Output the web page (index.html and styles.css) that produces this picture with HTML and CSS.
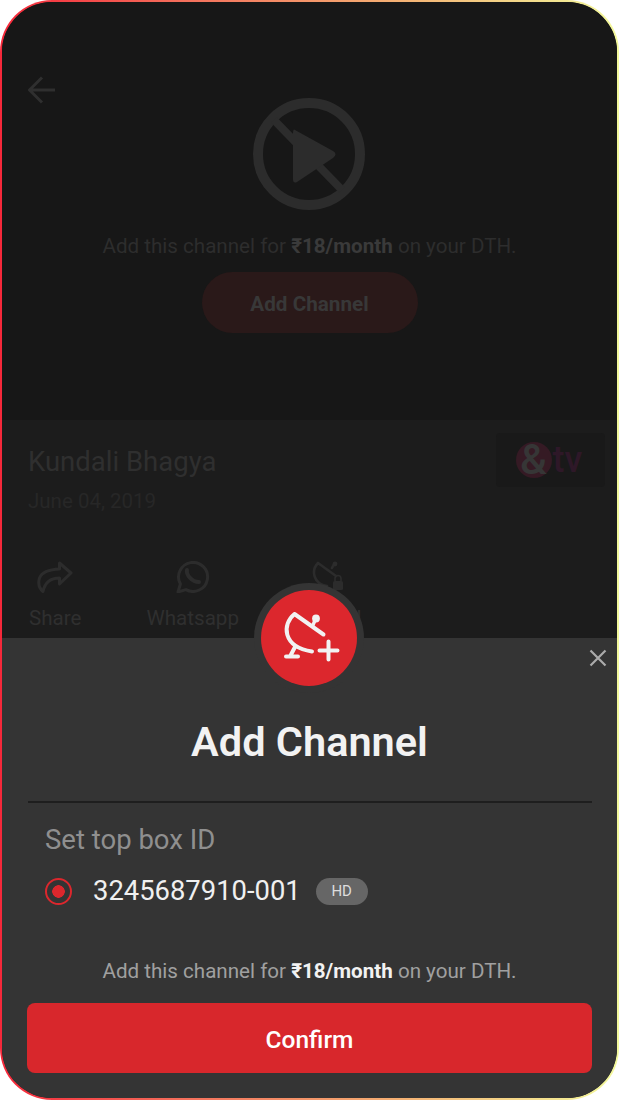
FILE: index.html
```html
<!DOCTYPE html>
<html>
  <head>
    <title>Add Channel</title>
    <link rel="stylesheet" href="styles.css">
  </head>
  <body>
    <div class="frame">
      <div class="screen">
        <div class="hero">
          <div class="hero-top">
            <svg class="back" width="28" height="28" viewBox="0 0 28 28">
              <path d="M27 14H2M14 1.5L1.5 14L14 26.5" fill="none" stroke="#2f2f2f" stroke-width="3"/>
            </svg>
            <svg class="blocked" width="112" height="112" viewBox="0 0 112 112">
              <circle cx="56" cy="56" r="51" fill="none" stroke="#2c2c2c" stroke-width="10"/>
              <path d="M21 22L89 92" stroke="#2c2c2c" stroke-width="8"/>
              <path d="M42 32L80 53Q85 56 80 60L44 84Q40 86 40 81V36Q40 30 42 32Z" fill="#2c2c2c"/>
            </svg>
          </div>
          <p class="note note-dim">Add this channel for <b>₹18/month</b> on your DTH.</p>
          <div class="add-btn">Add Channel</div>
        </div>

        <div class="details">
          <div class="show-row">
            <div>
              <div class="show-title">Kundali Bhagya</div>
              <div class="show-date">June 04, 2019</div>
            </div>
            <div class="logo">
              <span class="logo-amp">&amp;</span><span class="logo-tv">tv</span>
            </div>
          </div>
          <div class="actions">
            <div class="action action-share">
              <svg width="36" height="32" viewBox="0 0 36 32">
                <path d="M22.5 2L34 12L22.5 23V17C14 17 8 21 6 30.5C2 27 1 22 2.5 17C5 11 11 8.5 22.5 8Z" fill="none" stroke="#2c2c2c" stroke-width="3" stroke-linejoin="round"/>
              </svg>
              <span>Share</span>
            </div>
            <div class="action action-whatsapp">
              <svg width="36" height="32" viewBox="0 0 36 32">
                <path d="M3 31L5.4 23A14.5 14.5 0 1 1 11 28.6Z" fill="none" stroke="#2c2c2c" stroke-width="3" stroke-linejoin="round"/>
                <path d="M12 9C11 14 17 21 24 21" fill="none" stroke="#2c2c2c" stroke-width="4" stroke-linecap="round"/>
              </svg>
              <span>Whatsapp</span>
            </div>
            <div class="action action-channel">
              <svg width="36" height="32" viewBox="0 0 36 32">
                <path d="M6 2L24 15M20 7L22 3M6 2C-1 9 1 23 15 25" fill="none" stroke="#2c2c2c" stroke-width="2.6" stroke-linecap="round"/>
                <circle cx="23" cy="3" r="2.4" fill="#2c2c2c"/>
                <rect x="21" y="20" width="10" height="9" rx="1.5" fill="#2c2c2c"/>
                <path d="M23 20V17.5A3 3 0 0 1 29 17.5V20" fill="none" stroke="#2c2c2c" stroke-width="1.6"/>
              </svg>
              <span>Channel</span>
            </div>
          </div>
        </div>

        <div class="sheet">
          <div class="badge">
            <svg width="96" height="96" viewBox="0 0 96 96">
              <path d="M33.5 24L62.5 44.5M33.5 24C21 34 21 57 51 61.5M34 57L29 66.5M25 66.5H37" fill="none" stroke="#f2f2f2" stroke-width="4" stroke-linecap="round" stroke-linejoin="round"/>
              <path d="M52 35L55 28" stroke="#f2f2f2" stroke-width="3.4" stroke-linecap="round"/>
              <circle cx="55" cy="28.5" r="3.9" fill="#f2f2f2"/>
              <path d="M58.5 60.5H76.5M67.5 51.5V69.5" stroke="#f2f2f2" stroke-width="4" stroke-linecap="round"/>
            </svg>
          </div>
          <svg class="close" width="18" height="18" viewBox="0 0 18 18">
            <path d="M1.5 1.5L16.5 16.5M16.5 1.5L1.5 16.5" stroke="#ababab" stroke-width="2.2"/>
          </svg>
          <h1 class="sheet-title">Add Channel</h1>
          <div class="divider"></div>
          <div class="box-label">Set top box ID</div>
          <div class="box-row">
            <span class="radio"></span>
            <span class="box-id">3245687910-001</span>
            <span class="pill">HD</span>
          </div>
          <p class="note note-sheet">Add this channel for <b>₹18/month</b> on your DTH.</p>
          <div class="confirm">Confirm</div>
        </div>
      </div>
    </div>
  </body>
</html>
```

FILE: styles.css
```css
* {
  box-sizing: border-box;
}
body {
  margin: 0;
  background: #fff;
  font-family: Roboto, "Noto Sans", sans-serif;
}
.frame {
  width: 619px;
  height: 1100px;
  padding: 2px;
  border-radius: 52px;
  background: linear-gradient(90deg, #f5283a 0%, #f4705c 30%, #f5b274 65%, #f3f99c 100%);
}
.screen {
  display: flex;
  flex-direction: column;
  height: 100%;
  border-radius: 50px;
  overflow: hidden;
  background: #1c1c1c;
}

/* dimmed player area */
.hero {
  height: 418px;
  background: #171717;
  display: flex;
  flex-direction: column;
  align-items: center;
  padding-top: 96px;
}
.hero-top {
  display: grid;
  grid-template-columns: 250px 112px 1fr;
  width: 100%;
}
.back {
  margin: -22px 0 0 26px;
}
.blocked {
  grid-column: 2;
  margin-left: 1px;
}
.note {
  margin: 0;
  font-size: 20.6px;
  line-height: 24px;
  text-align: center;
}
.note-dim {
  margin-top: 24px;
  color: #2d2d2d;
}
.note-dim b {
  color: #3a3a3a;
}
.add-btn {
  margin-top: 14px;
  width: 216px;
  height: 61px;
  border-radius: 31px;
  background: #2a1919;
  color: #383838;
  font-size: 20.7px;
  font-weight: 700;
  line-height: 65px;
  text-align: center;
}

/* show info */
.details {
  flex: 1;
  padding: 13px 12px 0 26px;
  overflow: hidden;
}
.show-row {
  display: flex;
  justify-content: space-between;
  align-items: flex-start;
}
.show-title {
  margin-top: 13px;
  font-size: 27.5px;
  line-height: 32px;
  color: #2f2f2f;
}
.show-date {
  margin-top: 11px;
  font-size: 20.5px;
  line-height: 24px;
  color: #272727;
}
.logo {
  display: flex;
  align-items: center;
  justify-content: center;
  width: 109px;
  height: 54px;
  background: #191919;
  border-radius: 4px;
}
.logo-amp {
  width: 36px;
  height: 36px;
  margin-left: -3px;
  border-radius: 50%;
  background: #351a24;
  color: #363636;
  font-size: 42px;
  font-weight: 500;
  line-height: 36px;
  text-align: center;
}
.logo-tv {
  margin-left: 1px;
  color: #2e1828;
  font-size: 36px;
  font-weight: 500;
  line-height: 36px;
}
.actions {
  display: flex;
  margin-top: 48px;
}
.action {
  display: flex;
  flex-direction: column;
  align-items: center;
  width: max-content;
  color: #2f2f2f;
  font-size: 20.6px;
  line-height: 24px;
}
.action svg {
  margin-bottom: 13px;
}
.action-share {
  margin-left: 1px;
}
.action-whatsapp {
  margin-left: 65px;
}
.action-channel {
  margin-left: 48px;
}
.action-channel svg {
  margin-left: 12px;
}

/* bottom sheet */
.sheet {
  position: relative;
  height: 460px;
  background: #343434;
  padding: 76px 25px 0;
  display: flex;
  flex-direction: column;
}
.badge {
  position: absolute;
  left: 252px;
  top: -55px;
  width: 110px;
  height: 110px;
  padding: 7px;
  border-radius: 50%;
  background: #343434;
}
.badge svg {
  display: block;
  border-radius: 50%;
  background: #dc272d;
}
.close {
  position: absolute;
  right: 10px;
  top: 11px;
}
.sheet-title {
  margin: 0;
  font-size: 41.5px;
  font-weight: 600;
  line-height: 56px;
  color: #f2f2f2;
  text-align: center;
}
.divider {
  margin: 31px 0 0 1px;
  height: 2px;
  background: #1e1e1e;
}
.box-label {
  margin: 21px 0 0 18px;
  font-size: 27.5px;
  line-height: 32px;
  color: #8f8f8f;
}
.box-row {
  display: flex;
  align-items: center;
  margin: 18px 0 0 18px;
}
.radio {
  width: 27px;
  height: 27px;
  border: 2.5px solid #dc272d;
  border-radius: 50%;
  background: radial-gradient(circle, #dc272d 0 6px, transparent 6.5px);
}
.box-id {
  margin-left: 21px;
  font-size: 27.4px;
  line-height: 34px;
  color: #f0f0f0;
}
.pill {
  margin-left: 15px;
  width: 52px;
  height: 27px;
  border-radius: 14px;
  background: #666;
  color: #ddd;
  font-size: 15px;
  line-height: 27px;
  text-align: center;
}
.note-sheet {
  margin-top: 51px;
  color: #a0a0a0;
}
.note-sheet b {
  color: #f2f2f2;
}
.confirm {
  margin-top: 20px;
  height: 70px;
  border-radius: 8px;
  background: #d8272c;
  color: #fff;
  font-size: 24.5px;
  font-weight: 500;
  line-height: 74px;
  text-align: center;
}
```
